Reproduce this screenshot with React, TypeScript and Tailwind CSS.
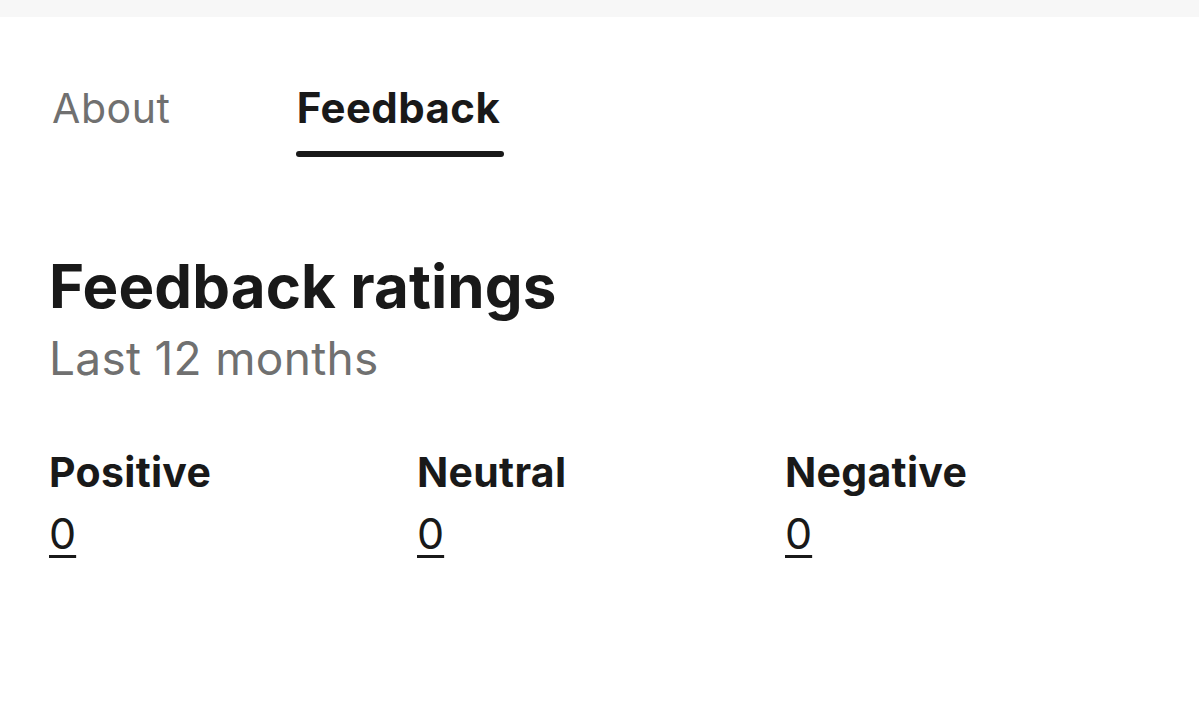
const font = { fontFamily: "Inter, 'Liberation Sans', sans-serif" };

function Tab({ label, active }: { label: string; active?: boolean }) {
    return (
        <div className="flex flex-col">
            <span
                className={
                    active
                        ? "text-[42px] leading-[48px] font-bold text-[#191919] tracking-[0.4px]"
                        : "text-[41px] leading-[48px] font-normal text-[#707070] tracking-[0.6px]"
                }
            >
                {label}
            </span>
            <div className={active ? "mt-[19px] h-[6px] -ml-[1px] -mr-[4px] rounded-full bg-[#191919]" : "mt-[19px] h-[6px]"} />
        </div>
    );
}

function Rating({ label, count }: { label: string; count: number }) {
    return (
        <div className="w-[368px] flex flex-col items-start">
            <span className="text-[41px] leading-[48px] font-bold text-[#191919] tracking-[0.3px]">{label}</span>
            <a
                href="#"
                className="mt-[13px] text-[43px] leading-[48px] font-normal text-[#191919] underline decoration-[3px] underline-offset-[6px]"
            >
                {count}
            </a>
        </div>
    );
}

export default function App() {
    return (
        <div className="w-[1199px] h-[703px] bg-white overflow-hidden" style={font}>
            <div className="h-[17px] bg-[#f7f7f7]" />
            <div className="pl-[49px]">
                <nav className="pt-[67px] pl-[3px] flex gap-[126px]">
                    <Tab label="About" />
                    <Tab label="Feedback" active />
                </nav>
                <h2 className="mt-[93px] text-[60px] leading-[72px] font-bold text-[#191919] tracking-[0.1px]">
                    Feedback ratings
                </h2>
                <p className="mt-[8px] text-[46px] leading-[56px] text-[#707070] tracking-[0.3px]">Last 12 months</p>
                <div className="mt-[62px] flex">
                    <Rating label="Positive" count={0} />
                    <Rating label="Neutral" count={0} />
                    <Rating label="Negative" count={0} />
                </div>
            </div>
        </div>
    );
}
